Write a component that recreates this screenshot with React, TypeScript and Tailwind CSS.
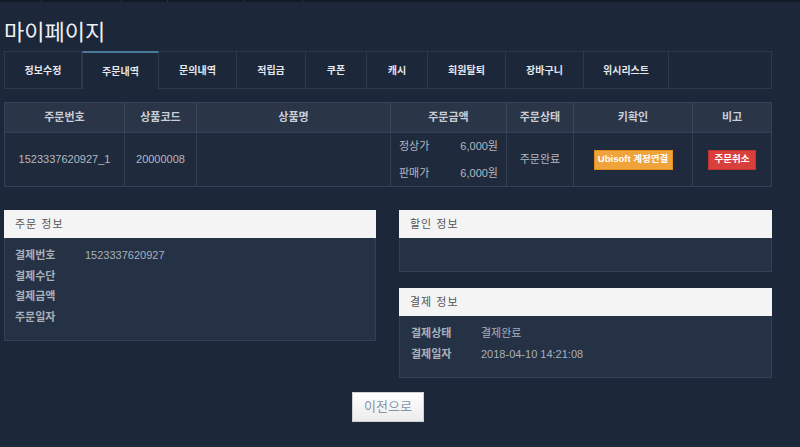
import React from "react";

const KR = { fontFamily: '"Liberation Sans", "Noto Sans CJK KR", sans-serif' };

const tabs: { label: string; w: string; active?: boolean }[] = [
  { label: "정보수정", w: "w-[78px]" },
  { label: "주문내역", w: "w-[77px]", active: true },
  { label: "문의내역", w: "w-[78px]" },
  { label: "적립금", w: "w-[69px]" },
  { label: "쿠폰", w: "w-[61px]" },
  { label: "캐시", w: "w-[61px]" },
  { label: "회원탈퇴", w: "w-[78px]" },
  { label: "장바구니", w: "w-[78px]" },
  { label: "위시리스트", w: "w-[85px]" },
  { label: "", w: "flex-1" },
];

function Panel({ title, children, bodyClass }: { title: string; children?: React.ReactNode; bodyClass: string }) {
  return (
    <div className="flex flex-col">
      <div className="h-[28px] bg-[#f4f4f4] flex items-center pl-[11px] text-[11px] text-[#555] tracking-[1px]">{title}</div>
      <div className={"bg-[#253145] border border-t-0 border-[#334154] " + bodyClass}>{children}</div>
    </div>
  );
}

function Row({ label, value }: { label: string; value?: string }) {
  return (
    <div className="flex h-[20.5px] items-center">
      <div className="w-[70px] text-[11px] font-bold text-[#a9b0ba]">{label}</div>
      <div className="text-[11px] text-[#a9b0ba]">{value}</div>
    </div>
  );
}

export default function App() {
  return (
    <div className="w-[800px] h-[447px] bg-[#1c2739] overflow-hidden" style={KR}>
      <div className="h-[2px] bg-[#121a26] flex">
        <div className="w-[42px] border-r border-[#2a3444]" />
        <div className="w-[80px] border-r border-[#2a3444]" />
        <div className="w-[46px] border-r border-[#2a3444]" />
        <div className="w-[77px] border-r border-[#2a3444]" />
        <div className="w-[58px] border-r border-[#2a3444]" />
      </div>
      <div className="pl-[4px] w-[772px]">
        <h1 className="text-[22px] leading-[24px] text-[#eef0f4] pt-[19px] h-[49px]">마이페이지</h1>
        <div className="flex h-[38px]">
          {tabs.map((t, i) => (
            <div
              key={i}
              className={
                t.w +
                " flex items-center justify-center text-[10px] font-bold text-[#e4e7ec] " +
                (t.active
                  ? "border-t-2 border-t-[#4c7a9a] border-x border-x-[#2e3a4c]"
                  : "border-y border-[#2e3a4c] " + (i === 0 ? "border-x" : "border-r"))
              }
            >
              {t.label}
            </div>
          ))}
        </div>
        <div className="mt-[13px] border border-[#36425a] text-center">
          <div className="flex h-[29px] bg-[#2a3548] text-[11px] font-bold text-[#c9ced6]">
            <div className="w-[120px] flex items-center justify-center border-r border-[#3a4659]">주문번호</div>
            <div className="w-[72px] flex items-center justify-center border-r border-[#3a4659]">상품코드</div>
            <div className="w-[194px] flex items-center justify-center border-r border-[#3a4659]">상품명</div>
            <div className="w-[116px] flex items-center justify-center border-r border-[#3a4659]">주문금액</div>
            <div className="w-[67px] flex items-center justify-center border-r border-[#3a4659]">주문상태</div>
            <div className="w-[119px] flex items-center justify-center border-r border-[#3a4659]">키확인</div>
            <div className="flex-1 flex items-center justify-center">비고</div>
          </div>
          <div className="flex h-[54px] bg-[#1f2a3c] border-t border-[#36425a] text-[11px] text-[#b3b9c2]">
            <div className="w-[120px] flex items-center justify-center border-r border-[#323e51]">1523337620927_1</div>
            <div className="w-[72px] flex items-center justify-center border-r border-[#323e51]">20000008</div>
            <div className="w-[194px] border-r border-[#323e51]" />
            <div className="w-[116px] flex flex-col justify-between py-[5px] pl-[8px] pr-[8px] border-r border-[#323e51]">
              <div className="flex justify-between"><span>정상가</span><span>6,000원</span></div>
              <div className="flex justify-between"><span>판매가</span><span>6,000원</span></div>
            </div>
            <div className="w-[67px] flex items-center justify-center border-r border-[#323e51]">주문완료</div>
            <div className="w-[119px] flex items-center justify-center border-r border-[#323e51]">
              <div className="w-[79px] h-[20px] bg-[#f0a33a] border border-[#e08e1c] text-white text-[9.5px] font-bold flex items-center justify-center">Ubisoft 계정연결</div>
            </div>
            <div className="flex-1 flex items-center justify-center">
              <div className="w-[48px] h-[20px] bg-[#d9403c] border border-[#c0302c] text-white text-[9.5px] font-bold flex items-center justify-center">주문취소</div>
            </div>
          </div>
        </div>
        <div className="mt-[23px] flex gap-[23px]">
          <div className="w-[372px]">
            <Panel title="주문 정보" bodyClass="h-[103px] pt-[7px] pl-[10px]">
              <Row label="결제번호" value="1523337620927" />
              <Row label="결제수단" />
              <Row label="결제금액" />
              <Row label="주문일자" />
            </Panel>
          </div>
          <div className="flex-1 flex flex-col gap-[16px]">
            <Panel title="할인 정보" bodyClass="h-[34px]" />
            <Panel title="결제 정보" bodyClass="h-[62px] pt-[7px] pl-[11px]">
              <Row label="결제상태" value="결제완료" />
              <Row label="결제일자" value="2018-04-10 14:21:08" />
            </Panel>
          </div>
        </div>
        <div className="flex justify-center mt-[14px]">
          <div className="w-[72px] h-[30px] bg-gradient-to-b from-white to-[#ececec] border border-[#d0d0d0] flex items-center justify-center text-[13px] text-[#8592a8]">이전으로</div>
        </div>
      </div>
    </div>
  );
}
